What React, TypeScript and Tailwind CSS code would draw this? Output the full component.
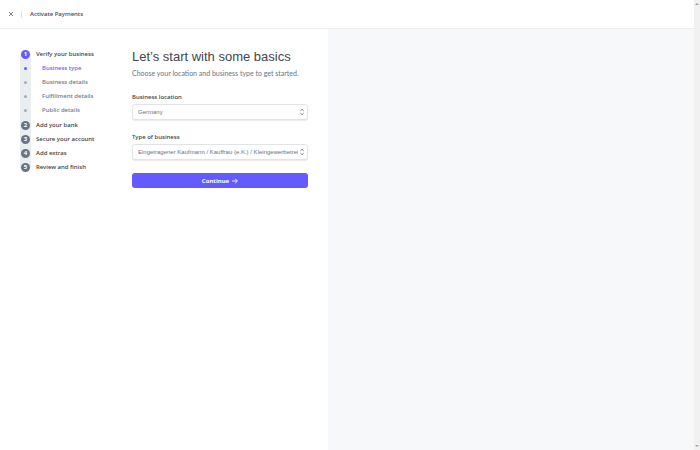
import type { ReactNode } from "react";

const substeps = ["Business type", "Business details", "Fulfillment details", "Public details"];
const laterSteps = ["Add your bank", "Secure your account", "Add extras", "Review and finish"];

function StepNumber({ value, active = false }: { value: number; active?: boolean }) {
  return (
    <span className="flex w-[11px] shrink-0 justify-center">
      <span
        className={`flex size-[9px] items-center justify-center rounded-full text-[6px] leading-none font-bold text-white ${
          active ? "bg-[#635bff]" : "bg-[#687385]"
        }`}
      >
        {value}
      </span>
    </span>
  );
}

function Steps() {
  return (
    <nav aria-label="Progress" className="relative w-[88px] shrink-0 self-start">
      <span className="absolute top-[7px] bottom-[6px] left-0 w-[11px] bg-[#ebeef1]" />
      <ol className="relative text-[6px] leading-[14px] font-medium text-[#353a44]">
        <li>
          <a href="#verify" className="flex h-[14px] items-center gap-[5px]">
            <StepNumber value={1} active />
            Verify your business
          </a>
          <ol className="mb-px">
            {substeps.map((label, i) => (
              <li key={label}>
                <a
                  href="#verify"
                  className={`flex h-[14px] items-center gap-[11px] ${i === 0 ? "text-[#635bff]" : "text-[#6c7688]"}`}
                >
                  <span className="flex w-[11px] shrink-0 justify-center">
                    <span className={`size-[3px] rounded-full ${i === 0 ? "bg-[#635bff]" : "bg-[#a3acba]"}`} />
                  </span>
                  {label}
                </a>
              </li>
            ))}
          </ol>
        </li>
        {laterSteps.map((label, i) => (
          <li key={label}>
            <a href="#later" className="flex h-[14px] items-center gap-[5px]">
              <StepNumber value={i + 2} />
              {label}
            </a>
          </li>
        ))}
      </ol>
    </nav>
  );
}

function Field({ id, label, children }: { id: string; label: string; children: ReactNode }) {
  return (
    <div className="flex flex-col gap-[2px]">
      <label htmlFor={id} className="text-[6px] leading-[10px] font-medium text-[#353a44]">
        {label}
      </label>
      <div className="relative">
        <select
          id={id}
          className="block h-4 w-full appearance-none truncate rounded-[3px] border border-[#e0e3e8] bg-white pr-[9px] pl-[5px] font-['Liberation_Sans',Arial,sans-serif] text-[6px] text-[#687385] shadow-[0_1px_1px_rgba(0,0,0,0.08)] [text-overflow:clip]"
        >
          {children}
        </select>
        <svg
          viewBox="0 0 6 8"
          className="pointer-events-none absolute top-1 right-[3px] h-2 w-[6px]"
          fill="none"
          stroke="#59616f"
          strokeWidth="0.8"
          aria-hidden="true"
        >
          <path d="M1.4 2.8 3 1.3 4.6 2.8M1.4 5.2 3 6.7 4.6 5.2" />
        </svg>
      </div>
    </div>
  );
}

export default function App() {
  return (
    <div className="flex min-h-screen bg-white font-['Noto_Sans',sans-serif]">
      <div className="flex min-w-0 flex-1 flex-col">
        <header className="flex h-[29px] items-center border-b border-[#ebeef1] pl-2">
          <button type="button" aria-label="Close" className="flex size-[6px] items-center justify-center">
            <svg viewBox="0 0 6 6" className="size-[6px]" stroke="#59616f" strokeWidth="0.8" aria-hidden="true">
              <path d="M1 1 5 5M5 1 1 5" />
            </svg>
          </button>
          <span className="ml-[7px] h-[7px] w-px bg-[#dfe3e8]" />
          <span className="ml-2 text-[6px] leading-[10px] font-medium text-[#414552]">Activate Payments</span>
        </header>
        <div className="flex flex-1">
          <main className="flex w-[328px] shrink-0 gap-6 pt-[18px] pr-5 pl-5">
            <Steps />
            <form className="min-w-0 flex-1" onSubmit={(e) => e.preventDefault()}>
              <h1 className="font-['Liberation_Sans',Arial,sans-serif] text-[13px] leading-5 text-[#414552]">
                Let’s start with some basics
              </h1>
              <p className="mt-px font-['Lato',sans-serif] text-[7px] leading-[10px] text-[#687385]">
                Choose your location and business type to get started.
              </p>
              <div className="mt-[14px] flex flex-col gap-3">
                <Field id="location" label="Business location">
                  <option>Germany</option>
                </Field>
                <Field id="type" label="Type of business">
                  <option>Eingetragener Kaufmann / Kauffrau (e.K.) / Kleingewerbetreibender</option>
                </Field>
              </div>
              <button
                type="submit"
                className="mt-[13px] flex h-[15px] w-full items-center justify-center gap-[3px] rounded-[3px] bg-[#635bff] text-[6px] leading-none font-bold text-white"
              >
                Continue
                <svg viewBox="0 0 6 6" className="size-[6px]" fill="none" stroke="currentColor" strokeWidth="0.9" aria-hidden="true">
                  <path d="M0 3H5.4M3.2 0.8 5.4 3 3.2 5.2" />
                </svg>
              </button>
            </form>
          </main>
          <aside className="flex-1 bg-[#f6f8fa]" />
        </div>
      </div>
      <div className="flex w-[6px] shrink-0 flex-col items-center justify-between bg-[#f1f1f1] py-[3px]" aria-hidden="true">
        <svg viewBox="0 0 4 2" className="h-[2px] w-1" fill="#a3a3a3">
          <path d="M0 2 2 0 4 2Z" />
        </svg>
        <svg viewBox="0 0 4 2" className="h-[2px] w-1" fill="#a3a3a3">
          <path d="M0 0 2 2 4 0Z" />
        </svg>
      </div>
    </div>
  );
}
